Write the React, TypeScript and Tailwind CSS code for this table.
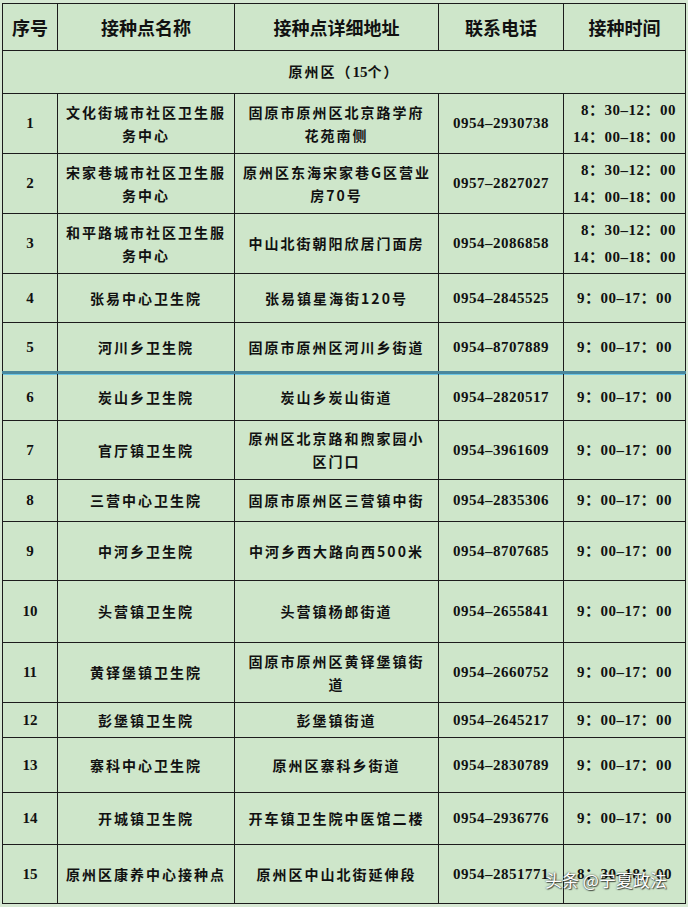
import React from "react";

type Row = {
  no: number;
  name: string[];
  addr: string[];
  phone: string;
  time: string[];
  h: number;
  blueTop?: boolean;
};

const AM = ["8：30–12：00", "14：00–18：00"];
const DAY = ["9：00–17：00"];

const rows: Row[] = [
  { no: 1, name: ["文化街城市社区卫生服", "务中心"], addr: ["固原市原州区北京路学府", "花苑南侧"], phone: "0954–2930738", time: AM, h: 60 },
  { no: 2, name: ["宋家巷城市社区卫生服", "务中心"], addr: ["原州区东海宋家巷G区营业", "房70号"], phone: "0957–2827027", time: AM, h: 60 },
  { no: 3, name: ["和平路城市社区卫生服", "务中心"], addr: ["中山北街朝阳欣居门面房"], phone: "0954–2086858", time: AM, h: 60 },
  { no: 4, name: ["张易中心卫生院"], addr: ["张易镇星海街120号"], phone: "0954–2845525", time: DAY, h: 49 },
  { no: 5, name: ["河川乡卫生院"], addr: ["固原市原州区河川乡街道"], phone: "0954–8707889", time: DAY, h: 50 },
  { no: 6, name: ["炭山乡卫生院"], addr: ["炭山乡炭山街道"], phone: "0954–2820517", time: DAY, h: 48, blueTop: true },
  { no: 7, name: ["官厅镇卫生院"], addr: ["原州区北京路和煦家园小", "区门口"], phone: "0954–3961609", time: DAY, h: 59 },
  { no: 8, name: ["三营中心卫生院"], addr: ["固原市原州区三营镇中街"], phone: "0954–2835306", time: DAY, h: 42 },
  { no: 9, name: ["中河乡卫生院"], addr: ["中河乡西大路向西500米"], phone: "0954–8707685", time: DAY, h: 59 },
  { no: 10, name: ["头营镇卫生院"], addr: ["头营镇杨郎街道"], phone: "0954–2655841", time: DAY, h: 62 },
  { no: 11, name: ["黄铎堡镇卫生院"], addr: ["固原市原州区黄铎堡镇街", "道"], phone: "0954–2660752", time: DAY, h: 60 },
  { no: 12, name: ["彭堡镇卫生院"], addr: ["彭堡镇街道"], phone: "0954–2645217", time: DAY, h: 35 },
  { no: 13, name: ["寨科中心卫生院"], addr: ["原州区寨科乡街道"], phone: "0954–2830789", time: DAY, h: 55 },
  { no: 14, name: ["开城镇卫生院"], addr: ["开车镇卫生院中医馆二楼"], phone: "0954–2936776", time: DAY, h: 52 },
  { no: 15, name: ["原州区康养中心接种点"], addr: ["原州区中山北街延伸段"], phone: "0954–2851771", time: ["8：30–18：00"], h: 59 },
];

const cjk = "font-['Noto_Sans_CJK_SC',sans-serif]";
const num = "font-['Liberation_Serif','Noto_Sans_CJK_SC',serif]";

function Lines({ lines }: { lines: string[] }) {
  return (
    <>
      {lines.map((l, i) => (
        <div key={i}>{l}</div>
      ))}
    </>
  );
}

export default function App() {
  return (
    <div className="relative w-[688px] h-[907px] overflow-hidden bg-[#d6e8d3] pl-[2px] pt-[3px] text-[#111]">
      <table className="table-fixed border-collapse w-[683px] bg-[#cee6ca]">
        <colgroup>
          <col className="w-[55px]" />
          <col className="w-[177px]" />
          <col className="w-[204px]" />
          <col className="w-[125px]" />
          <col className="w-[122px]" />
        </colgroup>
        <thead>
          <tr className={`h-[47px] ${cjk} text-[18px] font-bold`}>
            {["序号", "接种点名称", "接种点详细地址", "联系电话", "接种时间"].map((t) => (
              <th key={t} className="border border-[#1c1c1c] p-0 text-center font-bold">
                {t}
              </th>
            ))}
          </tr>
        </thead>
        <tbody>
          <tr className="h-[43px]">
            <td
              colSpan={5}
              className={`border border-[#1c1c1c] p-0 text-center ${cjk} text-[14px] font-bold tracking-[2px]`}
            >
              原州区（<span className={num + " text-[15px] tracking-normal"}>15</span>个）
            </td>
          </tr>
          {rows.map((r) => {
            const edge = r.blueTop
              ? "border border-[#1c1c1c] border-t-[3px] border-t-[#4a879c] shadow-[inset_0_1px_0_#6cc6e6]"
              : "border border-[#1c1c1c]";
            return (
              <tr key={r.no} style={{ height: r.h }}>
                <td className={`${edge} p-0 text-center ${num} text-[15px] font-bold`}>{r.no}</td>
                <td className={`${edge} px-[8px] text-center ${cjk} text-[14px] font-bold tracking-[2px] leading-[23px]`}>
                  <Lines lines={r.name} />
                </td>
                <td className={`${edge} px-[8px] text-center ${cjk} text-[14px] font-bold tracking-[2px] leading-[23px] whitespace-nowrap`}>
                  <Lines lines={r.addr} />
                </td>
                <td className={`${edge} p-0 text-center ${num} text-[15px] font-bold tracking-[0.5px]`}>{r.phone}</td>
                <td className={`${edge} p-0 text-center ${num} text-[15px] font-bold tracking-[0.5px] leading-[27px]`}>
                  <div className="inline-block text-right">
                    <Lines lines={r.time} />
                  </div>
                </td>
              </tr>
            );
          })}
        </tbody>
      </table>
      <div
        className={`absolute left-[545px] top-[867px] ${cjk} text-[17px] text-white [text-shadow:0_0_2px_rgba(0,0,0,0.8),1px_1px_1px_rgba(0,0,0,0.6)]`}
      >
        头条 @宁夏政法
      </div>
    </div>
  );
}
